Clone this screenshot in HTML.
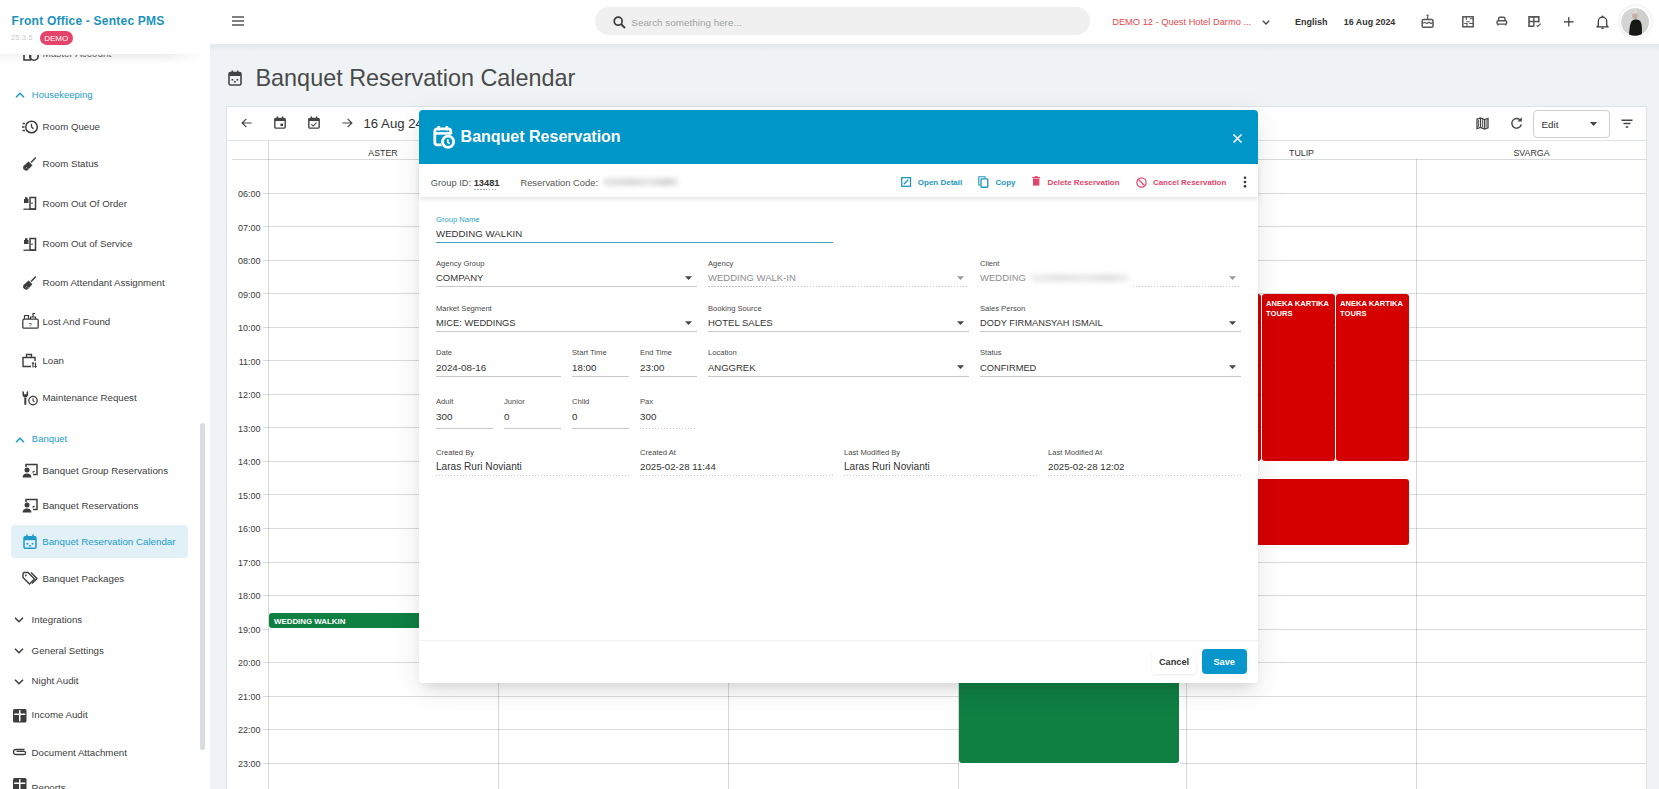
<!DOCTYPE html>
<html><head><meta charset="utf-8"><title>Banquet Reservation Calendar</title>
<style>
html,body{margin:0;padding:0;}
body{width:1659px;height:789px;overflow:hidden;position:relative;background:#eff3f6;font-family:"Liberation Sans",sans-serif;}
.a{position:absolute;}
.t{position:absolute;white-space:nowrap;}
svg{overflow:visible;}
</style></head><body>

<div class="a" style="left:210px;top:44px;width:1449px;height:8px;background:linear-gradient(#e4e8eb,#eff3f6);"></div>
<svg class="a" style="left:228px;top:70px;" width="14" height="16" viewBox="0 0 14 16"><rect x="1" y="2.5" width="12" height="12.5" rx="1.5" fill="none" stroke="#444" stroke-width="1.6"/><rect x="1" y="2.5" width="12" height="3.5" fill="#444"/><rect x="3.5" y="0.5" width="1.6" height="3" fill="#444"/><rect x="8.9" y="0.5" width="1.6" height="3" fill="#444"/><rect x="3.5" y="9" width="1.8" height="1.6" fill="#444"/><rect x="8.5" y="9" width="1.8" height="1.6" fill="#444"/><rect x="6" y="11" width="1.8" height="1.6" fill="#444"/></svg>
<div class="t " style="left:255.5px;top:63.00px;font-size:23.4px;line-height:30px;color:#4a4a4a;font-weight:400;">Banquet Reservation Calendar</div>
<div class="a" style="left:226px;top:106px;width:1421px;height:700px;background:#fff;border:1px solid #dfe3e7;box-sizing:border-box;"></div>
<div class="a" style="left:227px;top:140.2px;width:1419px;height:1.2px;background:#e1e4e7;"></div>
<div class="a" style="left:232px;top:159px;width:1414px;height:1px;background:rgba(10,15,30,0.15);"></div>
<div class="a" style="left:268px;top:141px;width:1px;height:660px;background:rgba(10,15,30,0.16);"></div>
<div class="a" style="left:498px;top:159px;width:1px;height:660px;background:rgba(10,15,30,0.16);"></div>
<div class="a" style="left:728px;top:159px;width:1px;height:660px;background:rgba(10,15,30,0.16);"></div>
<div class="a" style="left:958px;top:159px;width:1px;height:660px;background:rgba(10,15,30,0.16);"></div>
<div class="a" style="left:1186px;top:159px;width:1px;height:660px;background:rgba(10,15,30,0.16);"></div>
<div class="a" style="left:1416px;top:159px;width:1px;height:660px;background:rgba(10,15,30,0.16);"></div>
<div class="a" style="left:263px;top:193px;width:1383px;height:1px;background:rgba(10,15,30,0.15);"></div>
<div class="t" style="left:220.5px;width:40px;text-align:right;top:184.17px;font-size:9px;line-height:20px;color:#3c3c3c;font-weight:400;">06:00</div>
<div class="a" style="left:263px;top:226px;width:1383px;height:1px;background:rgba(10,15,30,0.15);"></div>
<div class="t" style="left:220.5px;width:40px;text-align:right;top:217.69px;font-size:9px;line-height:20px;color:#3c3c3c;font-weight:400;">07:00</div>
<div class="a" style="left:263px;top:260px;width:1383px;height:1px;background:rgba(10,15,30,0.15);"></div>
<div class="t" style="left:220.5px;width:40px;text-align:right;top:251.21px;font-size:9px;line-height:20px;color:#3c3c3c;font-weight:400;">08:00</div>
<div class="a" style="left:263px;top:293px;width:1383px;height:1px;background:rgba(10,15,30,0.15);"></div>
<div class="t" style="left:220.5px;width:40px;text-align:right;top:284.73px;font-size:9px;line-height:20px;color:#3c3c3c;font-weight:400;">09:00</div>
<div class="a" style="left:263px;top:327px;width:1383px;height:1px;background:rgba(10,15,30,0.15);"></div>
<div class="t" style="left:220.5px;width:40px;text-align:right;top:318.25px;font-size:9px;line-height:20px;color:#3c3c3c;font-weight:400;">10:00</div>
<div class="a" style="left:263px;top:360px;width:1383px;height:1px;background:rgba(10,15,30,0.15);"></div>
<div class="t" style="left:220.5px;width:40px;text-align:right;top:351.77px;font-size:9px;line-height:20px;color:#3c3c3c;font-weight:400;">11:00</div>
<div class="a" style="left:263px;top:394px;width:1383px;height:1px;background:rgba(10,15,30,0.15);"></div>
<div class="t" style="left:220.5px;width:40px;text-align:right;top:385.29px;font-size:9px;line-height:20px;color:#3c3c3c;font-weight:400;">12:00</div>
<div class="a" style="left:263px;top:427px;width:1383px;height:1px;background:rgba(10,15,30,0.15);"></div>
<div class="t" style="left:220.5px;width:40px;text-align:right;top:418.81px;font-size:9px;line-height:20px;color:#3c3c3c;font-weight:400;">13:00</div>
<div class="a" style="left:263px;top:461px;width:1383px;height:1px;background:rgba(10,15,30,0.15);"></div>
<div class="t" style="left:220.5px;width:40px;text-align:right;top:452.33px;font-size:9px;line-height:20px;color:#3c3c3c;font-weight:400;">14:00</div>
<div class="a" style="left:263px;top:494px;width:1383px;height:1px;background:rgba(10,15,30,0.15);"></div>
<div class="t" style="left:220.5px;width:40px;text-align:right;top:485.85px;font-size:9px;line-height:20px;color:#3c3c3c;font-weight:400;">15:00</div>
<div class="a" style="left:263px;top:528px;width:1383px;height:1px;background:rgba(10,15,30,0.15);"></div>
<div class="t" style="left:220.5px;width:40px;text-align:right;top:519.37px;font-size:9px;line-height:20px;color:#3c3c3c;font-weight:400;">16:00</div>
<div class="a" style="left:263px;top:562px;width:1383px;height:1px;background:rgba(10,15,30,0.15);"></div>
<div class="t" style="left:220.5px;width:40px;text-align:right;top:552.89px;font-size:9px;line-height:20px;color:#3c3c3c;font-weight:400;">17:00</div>
<div class="a" style="left:263px;top:595px;width:1383px;height:1px;background:rgba(10,15,30,0.15);"></div>
<div class="t" style="left:220.5px;width:40px;text-align:right;top:586.41px;font-size:9px;line-height:20px;color:#3c3c3c;font-weight:400;">18:00</div>
<div class="a" style="left:263px;top:629px;width:1383px;height:1px;background:rgba(10,15,30,0.15);"></div>
<div class="t" style="left:220.5px;width:40px;text-align:right;top:619.93px;font-size:9px;line-height:20px;color:#3c3c3c;font-weight:400;">19:00</div>
<div class="a" style="left:263px;top:662px;width:1383px;height:1px;background:rgba(10,15,30,0.15);"></div>
<div class="t" style="left:220.5px;width:40px;text-align:right;top:653.45px;font-size:9px;line-height:20px;color:#3c3c3c;font-weight:400;">20:00</div>
<div class="a" style="left:263px;top:696px;width:1383px;height:1px;background:rgba(10,15,30,0.15);"></div>
<div class="t" style="left:220.5px;width:40px;text-align:right;top:686.97px;font-size:9px;line-height:20px;color:#3c3c3c;font-weight:400;">21:00</div>
<div class="a" style="left:263px;top:729px;width:1383px;height:1px;background:rgba(10,15,30,0.15);"></div>
<div class="t" style="left:220.5px;width:40px;text-align:right;top:720.49px;font-size:9px;line-height:20px;color:#3c3c3c;font-weight:400;">22:00</div>
<div class="a" style="left:263px;top:763px;width:1383px;height:1px;background:rgba(10,15,30,0.15);"></div>
<div class="t" style="left:220.5px;width:40px;text-align:right;top:754.01px;font-size:9px;line-height:20px;color:#3c3c3c;font-weight:400;">23:00</div>
<div class="t" style="left:283.0px;width:200px;text-align:center;top:142.86px;font-size:8.8px;line-height:20px;color:#333;font-weight:400;">ASTER</div>
<div class="t" style="left:1201.5px;width:200px;text-align:center;top:142.86px;font-size:8.8px;line-height:20px;color:#333;font-weight:400;">TULIP</div>
<div class="t" style="left:1431.5px;width:200px;text-align:center;top:142.86px;font-size:8.8px;line-height:20px;color:#333;font-weight:400;">SVARGA</div>
<svg class="a" style="left:241px;top:118.3px;" width="11" height="10" viewBox="0 0 11 10"><path d="M10.6 5H1.3M5.4 0.8L1.1 5l4.3 4.2" fill="none" stroke="#444" stroke-width="1.15"/></svg>
<svg class="a" style="left:274px;top:116.3px;" width="12" height="13" viewBox="0 0 12 13"><rect x="0.8" y="2.5" width="10.4" height="9.6" rx="1.1" fill="none" stroke="#444" stroke-width="1.4"/><rect x="0.8" y="2.5" width="10.4" height="2.5" fill="#444"/><rect x="2.7" y="0.4" width="1.4" height="2.4" fill="#444"/><rect x="7.9" y="0.4" width="1.4" height="2.4" fill="#444"/><rect x="6.4" y="7.6" width="2.6" height="2.4" fill="#444"/></svg>
<svg class="a" style="left:307.8px;top:116.3px;" width="12" height="13" viewBox="0 0 12 13"><rect x="0.8" y="2.5" width="10.4" height="9.6" rx="1.1" fill="none" stroke="#444" stroke-width="1.4"/><rect x="0.8" y="2.5" width="10.4" height="2.5" fill="#444"/><rect x="2.7" y="0.4" width="1.4" height="2.4" fill="#444"/><rect x="7.9" y="0.4" width="1.4" height="2.4" fill="#444"/><path d="M3.3 8.3l1.9 1.7 3.3-3.3" fill="none" stroke="#444" stroke-width="1.05"/></svg>
<svg class="a" style="left:341.5px;top:118.3px;" width="11" height="10" viewBox="0 0 11 10"><path d="M0.4 5h9.3M5.6 0.8L9.9 5l-4.3 4.2" fill="none" stroke="#444" stroke-width="1.15"/></svg>
<div class="t " style="left:363.5px;top:113.90px;font-size:13.2px;line-height:20px;color:#333;font-weight:400;">16 Aug 24</div>
<svg class="a" style="left:1476px;top:117px;" width="13" height="12" viewBox="0 0 13 12"><path d="M1 2.2l3.5-1.2 4 1.5 3.5-1.2v9.5l-3.5 1.2-4-1.5-3.5 1.2z" fill="none" stroke="#444" stroke-width="1.3"/><path d="M4.5 1v9.6M8.5 2.5v9.5" stroke="#444" stroke-width="1.3"/><path d="M2.5 3v7M6.5 2v8.5M10.2 3v7.5" stroke="#444" stroke-width="0.8"/></svg>
<svg class="a" style="left:1510px;top:117px;" width="13" height="12" viewBox="0 0 13 12"><path d="M10.6 3.6A4.8 4.8 0 1 0 11.3 7.5" fill="none" stroke="#444" stroke-width="1.4"/><path d="M7.4 4.5h4.4V0.2z" fill="#444"/></svg>
<div class="a" style="left:1532.5px;top:110px;width:77px;height:27.5px;background:#fff;border:1px solid #cfcfcf;border-radius:4px;box-sizing:border-box;"></div>
<div class="t " style="left:1541.5px;top:114.69px;font-size:9.8px;line-height:20px;color:#333;font-weight:400;">Edit</div>
<svg class="a" style="left:1590px;top:122px;" width="7" height="4" viewBox="0 0 7 4"><path d="M0 0h7L3.5 4z" fill="#444"/></svg>
<svg class="a" style="left:1620.5px;top:118.5px;" width="12" height="10" viewBox="0 0 12 10"><path d="M0.5 1.2h11M2.5 4.6h7M4.7 8h2.6" stroke="#444" stroke-width="1.5"/></svg>
<div class="a" style="left:1250px;top:294px;width:11px;height:166.5px;background:#d50000;border-radius:3px;"></div>
<div class="a" style="left:1262px;top:294px;width:72.5px;height:166.5px;background:#d50000;border-radius:3px;"></div>
<div class="a" style="left:1336px;top:294px;width:73px;height:166.5px;background:#d50000;border-radius:3px;"></div>
<div class="a" style="left:1250px;top:460.5px;width:160px;height:1.5px;background:#fff;"></div>
<div class="t " style="left:1266px;top:298.53px;font-size:7.6px;line-height:10px;color:#fff;font-weight:700;">ANEKA KARTIKA</div>
<div class="t " style="left:1266px;top:308.53px;font-size:7.6px;line-height:10px;color:#fff;font-weight:700;">TOURS</div>
<div class="t " style="left:1340px;top:298.53px;font-size:7.6px;line-height:10px;color:#fff;font-weight:700;">ANEKA KARTIKA</div>
<div class="t " style="left:1340px;top:308.53px;font-size:7.6px;line-height:10px;color:#fff;font-weight:700;">TOURS</div>
<div class="a" style="left:1200px;top:479px;width:209px;height:65.5px;background:#d50000;border-radius:3px;"></div>
<div class="a" style="left:959px;top:600px;width:220px;height:162.5px;background:#0f7f42;border-radius:3px;"></div>
<div class="a" style="left:959px;top:762.5px;width:221px;height:1.5px;background:#fff;"></div>
<div class="a" style="left:269px;top:612.8px;width:300px;height:15.5px;background:#0f7f42;border-radius:3px;"></div>
<div class="a" style="left:269px;top:628.3px;width:300px;height:1.4px;background:#fff;"></div>
<div class="t " style="left:274px;top:615.84px;font-size:7.9px;line-height:12px;color:#fff;font-weight:700;">WEDDING WALKIN</div>
<div class="a" style="left:0px;top:0px;width:210px;height:789px;background:#fff;"></div>
<svg class="a" style="left:22.5px;top:45.5px;" width="16" height="16" viewBox="0 0 16 16"><path d="M1 4h6.5v10H1z" fill="none" stroke="#3d3d3d" stroke-width="1.6"/><circle cx="11" cy="10" r="4.2" fill="none" stroke="#3d3d3d" stroke-width="1.6"/></svg>
<div class="t " style="left:42.4px;top:43.90px;font-size:10px;line-height:20px;color:#666;font-weight:400;">Master Account</div>
<div class="a" style="left:0px;top:44px;width:210px;height:10.5px;background:#fff;"></div>
<div class="a" style="left:0px;top:54px;width:205px;height:10px;background:linear-gradient(rgba(0,0,0,0.07),rgba(0,0,0,0.035) 50%,rgba(0,0,0,0));-webkit-mask-image:linear-gradient(90deg,rgba(0,0,0,.6),#000 40%,#000 80%,rgba(0,0,0,0));"></div>
<svg class="a" style="left:14.5px;top:92px;" width="10" height="6" viewBox="0 0 10 6"><path d="M1 5.2L5 1.3l4 3.9" fill="none" stroke="#1e9bc6" stroke-width="1.6"/></svg>
<div class="t " style="left:31.8px;top:85.08px;font-size:9.5px;line-height:20px;color:#1e9bc6;font-weight:400;">Housekeeping</div>
<svg class="a" style="left:22px;top:118.8px;" width="16" height="16" viewBox="0 0 16 16"><circle cx="9.5" cy="8" r="5.8" fill="none" stroke="#3d3d3d" stroke-width="1.5"/><path d="M9.5 4.8V8l2 1.8" fill="none" stroke="#3d3d3d" stroke-width="1.3"/><path d="M0.5 4.5h2.5M0 8h2.5M0.5 11.5h2.5" stroke="#3d3d3d" stroke-width="1.3"/></svg>
<div class="t " style="left:42.4px;top:117.09px;font-size:9.7px;line-height:20px;color:#404040;font-weight:400;">Room Queue</div>
<svg class="a" style="left:22px;top:155.9px;" width="15" height="16" viewBox="0 0 15 16"><path d="M9 6.5L13.8 1.6" stroke="#3d3d3d" stroke-width="1.5"/><path d="M1.2 10.2L6.6 5.4 10.4 9.2 5.6 14.6c-1.8.5-3.5-.3-4.4-2z" fill="#3d3d3d"/><path d="M3.5 12.5l1.5-1.5M5.3 13.4l1.5-1.5" stroke="#fff" stroke-width="0.5"/></svg>
<div class="t " style="left:42.4px;top:154.19px;font-size:9.7px;line-height:20px;color:#404040;font-weight:400;">Room Status</div>
<svg class="a" style="left:22px;top:195.4px;" width="16" height="16" viewBox="0 0 16 16"><path d="M8 2.5h5.5v11.5H8z" fill="none" stroke="#3d3d3d" stroke-width="1.5"/><path d="M10 7.5v1.5" stroke="#3d3d3d" stroke-width="1.3"/><rect x="2" y="4" width="4.5" height="4" fill="#3d3d3d"/><rect x="3" y="2.2" width="2.5" height="2" fill="#3d3d3d"/><path d="M1.5 14.2h12.5" stroke="#3d3d3d" stroke-width="1.3"/></svg>
<div class="t " style="left:42.4px;top:193.69px;font-size:9.7px;line-height:20px;color:#404040;font-weight:400;">Room Out Of Order</div>
<svg class="a" style="left:22px;top:236.0px;" width="16" height="16" viewBox="0 0 16 16"><path d="M8 2.5h5.5v11.5H8z" fill="none" stroke="#3d3d3d" stroke-width="1.5"/><path d="M10 7.5v1.5" stroke="#3d3d3d" stroke-width="1.3"/><rect x="2" y="4" width="4.5" height="4" fill="#3d3d3d"/><rect x="3" y="2.2" width="2.5" height="2" fill="#3d3d3d"/><path d="M1.5 14.2h12.5" stroke="#3d3d3d" stroke-width="1.3"/></svg>
<div class="t " style="left:42.4px;top:234.29px;font-size:9.7px;line-height:20px;color:#404040;font-weight:400;">Room Out of Service</div>
<svg class="a" style="left:22px;top:275.1px;" width="15" height="16" viewBox="0 0 15 16"><path d="M9 6.5L13.8 1.6" stroke="#3d3d3d" stroke-width="1.5"/><path d="M1.2 10.2L6.6 5.4 10.4 9.2 5.6 14.6c-1.8.5-3.5-.3-4.4-2z" fill="#3d3d3d"/><path d="M3.5 12.5l1.5-1.5M5.3 13.4l1.5-1.5" stroke="#fff" stroke-width="0.5"/></svg>
<div class="t " style="left:42.4px;top:273.39px;font-size:9.7px;line-height:20px;color:#404040;font-weight:400;">Room Attendant Assignment</div>
<svg class="a" style="left:22px;top:311.9px;" width="17" height="17" viewBox="0 0 17 17"><rect x="0.8" y="7.2" width="15.4" height="9" rx="1.2" fill="none" stroke="#3d3d3d" stroke-width="1.3"/><path d="M2.5 7V3.5h4V7M8.5 7V5h5v2M11 5V1.5h2" fill="none" stroke="#3d3d3d" stroke-width="1.2"/><text x="6.5" y="15" font-size="6" font-family="Liberation Sans" fill="#3d3d3d">?</text></svg>
<div class="t " style="left:42.4px;top:312.19px;font-size:9.7px;line-height:20px;color:#404040;font-weight:400;">Lost And Found</div>
<svg class="a" style="left:22px;top:353.0px;" width="16" height="15" viewBox="0 0 16 15"><path d="M9 13.5H1V4.5h12V8" fill="none" stroke="#3d3d3d" stroke-width="1.4"/><path d="M4.5 4.5V1.5h5v3" fill="none" stroke="#3d3d3d" stroke-width="1.3"/><path d="M11 9.5v5M13.5 9.5v5" stroke="#3d3d3d" stroke-width="1.2"/><path d="M10 11l1-1.5 1 1.5M12.5 13l1 1.5 1-1.5" fill="none" stroke="#3d3d3d" stroke-width="1"/></svg>
<div class="t " style="left:42.4px;top:351.29px;font-size:9.7px;line-height:20px;color:#404040;font-weight:400;">Loan</div>
<svg class="a" style="left:22px;top:389.9px;" width="16" height="16" viewBox="0 0 16 16"><path d="M3.3 14.8V7.5" stroke="#3d3d3d" stroke-width="2"/><path d="M0.5 0.8v3.6a2.8 2.8 0 0 0 5.6 0V0.8L4.6 2v2.2H2V2z" fill="#3d3d3d"/><circle cx="11" cy="10.6" r="4.2" fill="none" stroke="#3d3d3d" stroke-width="1.3"/><path d="M11 8.2v2.6l1.6 1.1" fill="none" stroke="#3d3d3d" stroke-width="1.1"/></svg>
<div class="t " style="left:42.4px;top:388.19px;font-size:9.7px;line-height:20px;color:#404040;font-weight:400;">Maintenance Request</div>
<svg class="a" style="left:14.5px;top:436.5px;" width="10" height="6" viewBox="0 0 10 6"><path d="M1 5.2L5 1.3l4 3.9" fill="none" stroke="#1e9bc6" stroke-width="1.6"/></svg>
<div class="t " style="left:31.8px;top:429.49px;font-size:9.5px;line-height:20px;color:#1e9bc6;font-weight:400;">Banquet</div>
<div class="a" style="left:10.8px;top:525px;width:177.4px;height:33.4px;background:#e2f1f8;border-radius:4px;"></div>
<svg class="a" style="left:22px;top:462.5px;" width="16" height="15" viewBox="0 0 16 15"><path d="M4 4V1.5h11v10h-4" fill="none" stroke="#3d3d3d" stroke-width="1.5"/><circle cx="5" cy="7" r="2.5" fill="#3d3d3d"/><path d="M0.5 14.5c0-2.5 2-4 4.5-4s4.5 1.5 4.5 4z" fill="#3d3d3d"/><path d="M10.5 9.5l2 -1.5" stroke="#3d3d3d" stroke-width="1.3"/></svg>
<div class="t " style="left:42.4px;top:460.59px;font-size:9.75px;line-height:20px;color:#404040;font-weight:400;">Banquet Group Reservations</div>
<svg class="a" style="left:22px;top:498px;" width="16" height="15" viewBox="0 0 16 15"><path d="M4 4V1.5h11v10h-4" fill="none" stroke="#3d3d3d" stroke-width="1.5"/><circle cx="5" cy="7" r="2.5" fill="#3d3d3d"/><path d="M0.5 14.5c0-2.5 2-4 4.5-4s4.5 1.5 4.5 4z" fill="#3d3d3d"/><path d="M10.5 9.5l2 -1.5" stroke="#3d3d3d" stroke-width="1.3"/></svg>
<div class="t " style="left:42.4px;top:496.09px;font-size:9.75px;line-height:20px;color:#404040;font-weight:400;">Banquet Reservations</div>
<svg class="a" style="left:23px;top:533.5px;" width="14" height="15" viewBox="0 0 14 15"><rect x="1" y="2.8" width="12" height="11.5" rx="1.4" fill="none" stroke="#1e9bc6" stroke-width="1.5"/><rect x="1" y="2.8" width="12" height="3.4" fill="#1e9bc6"/><rect x="3.2" y="0.5" width="1.6" height="3" fill="#1e9bc6"/><rect x="9.2" y="0.5" width="1.6" height="3" fill="#1e9bc6"/><rect x="3.5" y="9" width="1.8" height="1.6" fill="#1e9bc6"/><rect x="8.7" y="9" width="1.8" height="1.6" fill="#1e9bc6"/><rect x="6.1" y="11" width="1.8" height="1.6" fill="#1e9bc6"/></svg>
<div class="t " style="left:42.2px;top:532.29px;font-size:9.75px;line-height:20px;color:#1e9bc6;font-weight:400;">Banquet Reservation Calendar</div>
<svg class="a" style="left:22px;top:571px;" width="16" height="15" viewBox="0 0 16 15"><path d="M1 2.5v4l6.5 6.5 5-5L6 1.5H2z" fill="none" stroke="#3d3d3d" stroke-width="1.4"/><path d="M9 1.5l6 6-5 5" fill="none" stroke="#3d3d3d" stroke-width="1.4"/><circle cx="3.8" cy="4.5" r="0.9" fill="#3d3d3d"/></svg>
<div class="t " style="left:42.4px;top:569.29px;font-size:9.75px;line-height:20px;color:#404040;font-weight:400;">Banquet Packages</div>
<svg class="a" style="left:14px;top:617px;" width="10" height="6" viewBox="0 0 10 6"><path d="M1 0.8L5 4.7l4-3.9" fill="none" stroke="#3d3d3d" stroke-width="1.6"/></svg>
<div class="t " style="left:31.6px;top:610.29px;font-size:9.7px;line-height:20px;color:#404040;font-weight:400;">Integrations</div>
<svg class="a" style="left:14px;top:648px;" width="10" height="6" viewBox="0 0 10 6"><path d="M1 0.8L5 4.7l4-3.9" fill="none" stroke="#3d3d3d" stroke-width="1.6"/></svg>
<div class="t " style="left:31.6px;top:640.89px;font-size:9.7px;line-height:20px;color:#404040;font-weight:400;">General Settings</div>
<svg class="a" style="left:14px;top:678.5px;" width="10" height="6" viewBox="0 0 10 6"><path d="M1 0.8L5 4.7l4-3.9" fill="none" stroke="#3d3d3d" stroke-width="1.6"/></svg>
<div class="t " style="left:31.6px;top:671.39px;font-size:9.7px;line-height:20px;color:#404040;font-weight:400;">Night Audit</div>
<svg class="a" style="left:13px;top:708.5px;" width="14" height="14" viewBox="0 0 14 14"><rect x="0" y="0" width="13.5" height="13.5" rx="1.5" fill="#3d3d3d"/><path d="M1.2 5.2h11.1M6.75 1.2v11.1" stroke="#fff" stroke-width="1.5"/></svg>
<div class="t " style="left:31.6px;top:705.49px;font-size:9.7px;line-height:20px;color:#404040;font-weight:400;">Income Audit</div>
<svg class="a" style="left:12px;top:746px;" width="15" height="11" viewBox="0 0 15 11"><path d="M12.5 3.5H4a2.5 2.5 0 0 0 0 5h8a1.6 1.6 0 0 0 0-3.2H4.5" fill="none" stroke="#3d3d3d" stroke-width="1.3"/></svg>
<div class="t " style="left:31.6px;top:742.69px;font-size:9.7px;line-height:20px;color:#404040;font-weight:400;">Document Attachment</div>
<svg class="a" style="left:13px;top:778px;" width="14" height="14" viewBox="0 0 14 14"><rect x="0" y="0" width="13.5" height="13.5" rx="1.5" fill="#3d3d3d"/><path d="M1.2 5.2h11.1M6.75 1.2v11.1" stroke="#fff" stroke-width="1.5"/></svg>
<div class="t " style="left:31.6px;top:778.29px;font-size:9.7px;line-height:20px;color:#404040;font-weight:400;">Reports</div>
<div class="a" style="left:199.8px;top:423px;width:5.6px;height:327px;background:#d9dde1;border-radius:3px;"></div>
<div class="a" style="left:0px;top:0px;width:1659px;height:44px;background:#fff;"></div>
<div class="t " style="left:11.6px;top:11.06px;font-size:12.1px;line-height:20px;color:#1b93bd;font-weight:700;letter-spacing:0.18px;">Front Office - Sentec PMS</div>
<div class="t " style="left:11px;top:28.42px;font-size:7.2px;line-height:20px;color:#c8c8c8;font-weight:400;letter-spacing:0.3px;">25.3.5</div>
<div class="a" style="left:40px;top:31px;width:32.5px;height:14px;background:#e5436a;border-radius:7px;"></div>
<div class="t" style="left:36.25px;width:40px;text-align:center;top:28.54px;font-size:8.0px;line-height:20px;color:#fff;font-weight:400;">DEMO</div>
<svg class="a" style="left:231.5px;top:16px;" width="12" height="10" viewBox="0 0 12 10"><path d="M0 1h12M0 5h12M0 9h12" stroke="#555" stroke-width="1.5"/></svg>
<div class="a" style="left:595px;top:7px;width:495px;height:28.3px;background:#f0f0f0;border-radius:14px;"></div>
<svg class="a" style="left:613px;top:15.5px;" width="13" height="13" viewBox="0 0 13 13"><circle cx="5.2" cy="5.2" r="4" fill="none" stroke="#3a3a3a" stroke-width="1.7"/><path d="M8.2 8.2l3.8 3.8" stroke="#3a3a3a" stroke-width="1.9"/></svg>
<div class="t " style="left:631.3px;top:12.90px;font-size:9.9px;line-height:20px;color:#a3a3a3;font-weight:400;">Search something here...</div>
<div class="t " style="left:1112.2px;top:12.28px;font-size:9.3px;line-height:20px;color:#e5484d;font-weight:400;">DEMO 12 - Quest Hotel Darmo ...</div>
<svg class="a" style="left:1261.5px;top:20px;" width="8" height="5" viewBox="0 0 8 5"><path d="M0.8 0.8L4 4l3.2-3.2" fill="none" stroke="#444" stroke-width="1.3"/></svg>
<div class="t " style="left:1295px;top:12.27px;font-size:9.0px;line-height:20px;color:#333;font-weight:700;font-weight:600;">English</div>
<div class="t " style="left:1343.8px;top:12.47px;font-size:8.9px;line-height:20px;color:#333;font-weight:700;">16 Aug 2024</div>
<svg class="a" style="left:1420.5px;top:14px;" width="13" height="14" viewBox="0 0 13 14"><rect x="1.2" y="5.6" width="10.8" height="7.6" rx="1.3" fill="none" stroke="#555" stroke-width="1.5"/><path d="M1.8 9.4l1.8-1.1 2.2 1.2 2.2-1.3 2.2 1.3 1.6-1" fill="none" stroke="#555" stroke-width="1.1"/><path d="M6.6 2.6v3" stroke="#555" stroke-width="1.2"/><circle cx="6.6" cy="1.6" r="1.1" fill="#555"/></svg>
<svg class="a" style="left:1461.5px;top:15.5px;" width="12" height="12" viewBox="0 0 12 12"><rect x="0.8" y="0.8" width="10.4" height="10" fill="none" stroke="#555" stroke-width="1.5"/><path d="M4.3 0.8v3.2M4.3 5.8h3.5M7.8 2.8h3.4M2.2 7.5h2.8v3.3M7.2 7.5h4" fill="none" stroke="#555" stroke-width="1.1"/></svg>
<svg class="a" style="left:1495.5px;top:16px;" width="12" height="10" viewBox="0 0 12 10"><path d="M2.6 5V2.6a1.4 1.4 0 0 1 1.4-1.4h3.6a1.4 1.4 0 0 1 1.4 1.4V5" fill="none" stroke="#555" stroke-width="1.4"/><rect x="1" y="4.8" width="9.6" height="3.3" rx="1.2" fill="none" stroke="#555" stroke-width="1.4"/><path d="M2 8v1.6M9.6 8v1.6" stroke="#555" stroke-width="1.3"/></svg>
<svg class="a" style="left:1527.5px;top:15.5px;" width="15" height="12" viewBox="0 0 15 12"><path d="M10.8 6.5V0.9H1v9.4h5.2" fill="none" stroke="#555" stroke-width="1.6"/><path d="M1 5.5h9.8M5.8 0.9v9.4" stroke="#555" stroke-width="1.4"/><path d="M8.6 9.3l1.2 1.1 2.8-2.7" fill="none" stroke="#555" stroke-width="1.1"/></svg>
<svg class="a" style="left:1563.5px;top:16.5px;" width="10" height="10" viewBox="0 0 10 10"><path d="M4.8 0v9.6M0 4.8h9.6" stroke="#3a3a3a" stroke-width="1.2"/></svg>
<svg class="a" style="left:1595.5px;top:14.5px;" width="13" height="14" viewBox="0 0 13 14"><path d="M2.3 10.6V6.3a4.2 4.2 0 0 1 8.4 0v4.3l1.4 1.2H0.9z" fill="none" stroke="#3a3a3a" stroke-width="1.25" stroke-linejoin="round"/><path d="M5.3 13.2h2.4" stroke="#3a3a3a" stroke-width="1.3"/><circle cx="6.5" cy="1.3" r="0.9" fill="#3a3a3a"/></svg>
<div class="a" style="left:1619.5px;top:5.5px;width:31px;height:31px;border-radius:50%;background:#fff;box-shadow:0 0 4px rgba(0,0,0,0.12);"></div>
<svg class="a" style="left:1621px;top:7.5px;" width="28" height="28" viewBox="0 0 28 28"><defs><clipPath id="avc"><circle cx="14" cy="14" r="13.8"/></clipPath></defs><g clip-path="url(#avc)"><rect width="28" height="28" fill="#d4d4d4"/><rect x="16" y="0" width="12" height="28" fill="#cfcfcf"/><path d="M8 29c0.3-7 0.8-13 2.6-15.8 1.4-1.6 3.4-1.9 5-1.6 3 .5 4.8 2 5.2 6.5.3 3.5.2 7.5-.3 10.9z" fill="#161816"/><ellipse cx="13.9" cy="7.6" rx="2.6" ry="3.6" fill="#c9aba0"/><path d="M11.6 5.5c.3-2.8 4.3-2.8 4.8-.3z" fill="#e8dcd5"/></g></svg>
<div class="a" style="left:419px;top:110px;width:839px;height:573px;background:#fff;border-radius:4px;box-shadow:0 9px 12px -5px rgba(0,0,0,.11),0 7px 30px 1px rgba(0,0,0,.085);"></div>
<div class="a" style="left:419px;top:110px;width:839px;height:54px;background:#0096c8;border-radius:4px 4px 0 0;"></div>
<svg class="a" style="left:432.5px;top:124.5px;" width="24" height="25" viewBox="0 0 24 25"><path d="M8.6 19.9H4a2.2 2.2 0 0 1-2.2-2.2V6a2.2 2.2 0 0 1 2.2-2.2h11.6a2.2 2.2 0 0 1 2.2 2.2V9.2" fill="none" stroke="#fff" stroke-width="2.8"/><path d="M1.8 8.4h16" stroke="#fff" stroke-width="2.6"/><path d="M5.8 1v4.4M13.8 1v4.4" stroke="#fff" stroke-width="2.6"/><circle cx="15.1" cy="16.8" r="5.6" fill="#0096c8" stroke="#fff" stroke-width="2.8"/><path d="M14.8 14.2v2.9l1.7 1.5" fill="none" stroke="#fff" stroke-width="1.8"/></svg>
<div class="t " style="left:460.6px;top:125.78px;font-size:16.0px;line-height:22px;color:#fff;font-weight:700;">Banquet Reservation</div>
<svg class="a" style="left:1232.5px;top:133.5px;" width="9" height="9" viewBox="0 0 9 9"><path d="M0.5 0.5l8 8M8.5 0.5l-8 8" stroke="#fff" stroke-width="1.6"/></svg>
<div class="a" style="left:419px;top:164px;width:839px;height:33px;background:#fff;box-shadow:0 2px 4px rgba(0,0,0,.07),0 4px 6px rgba(0,0,0,.03);"></div>
<div class="t " style="left:430.8px;top:172.98px;font-size:9.3px;line-height:20px;color:#555;font-weight:400;">Group ID: <b style="color:#333">13481</b></div>
<div class="a" style="left:474px;top:188.5px;width:23px;height:1px;background:repeating-linear-gradient(90deg,#aaa 0,#aaa 1.5px,transparent 1.5px,transparent 3px);"></div>
<div class="t " style="left:520.4px;top:172.98px;font-size:9.4px;line-height:20px;color:#555;font-weight:400;">Reservation Code:</div>
<div class="a" style="left:603px;top:178px;width:76px;height:8px;background:linear-gradient(90deg,#e6e6e6,#dcdcdc 40%,#e8e8e8 60%,#d6d6d6 85%,#eeeeee);border-radius:4px;filter:blur(2px);"></div>
<svg class="a" style="left:901px;top:176.5px;" width="11" height="10" viewBox="0 0 11 10"><rect x="0.7" y="0.7" width="8.8" height="8.6" fill="none" stroke="#1f97bd" stroke-width="1.3"/><path d="M2.8 7.2l4.4-4.4" stroke="#1f97bd" stroke-width="1.3"/></svg>
<div class="t " style="left:917.8px;top:172.84px;font-size:8.0px;line-height:20px;color:#1f97bd;font-weight:700;">Open Detail</div>
<svg class="a" style="left:978px;top:175.8px;" width="12" height="12" viewBox="0 0 12 12"><path d="M2.3 9H0.8V0.8h6.2v1.3" fill="none" stroke="#1f97bd" stroke-width="1.1"/><rect x="3" y="2.8" width="6.8" height="8.4" rx="0.8" fill="none" stroke="#1f97bd" stroke-width="1.35"/></svg>
<div class="t " style="left:995.5px;top:172.84px;font-size:8.0px;line-height:20px;color:#1f97bd;font-weight:700;">Copy</div>
<svg class="a" style="left:1032px;top:176.2px;" width="9" height="10" viewBox="0 0 9 10"><path d="M0.3 1.6h7.8" stroke="#e2456a" stroke-width="1.3"/><path d="M2.8 0.8h2.8" stroke="#e2456a" stroke-width="1.4"/><path d="M1 2.6h6.4v7H1z" fill="#e2456a"/></svg>
<div class="t " style="left:1047.6px;top:172.84px;font-size:8.0px;line-height:20px;color:#e2456a;font-weight:700;">Delete Reservation</div>
<svg class="a" style="left:1136px;top:176.5px;" width="11" height="11" viewBox="0 0 11 11"><circle cx="5.5" cy="5.5" r="4.6" fill="none" stroke="#e2456a" stroke-width="1.25"/><path d="M2.3 2.3l6.4 6.4" stroke="#e2456a" stroke-width="1.25"/></svg>
<div class="t " style="left:1153px;top:172.84px;font-size:7.9px;line-height:20px;color:#e2456a;font-weight:700;">Cancel Reservation</div>
<svg class="a" style="left:1243px;top:176px;" width="4" height="12" viewBox="0 0 4 12"><circle cx="2" cy="1.8" r="1.3" fill="#333"/><circle cx="2" cy="6" r="1.3" fill="#333"/><circle cx="2" cy="10.2" r="1.3" fill="#333"/></svg>
<div class="t " style="left:436px;top:209.63px;font-size:7.6px;line-height:20px;color:#2aa3cc;font-weight:400;">Group Name</div>
<div class="t " style="left:436px;top:224.09px;font-size:9.7px;line-height:20px;color:#333;font-weight:400;">WEDDING WALKIN</div>
<div class="a" style="left:436px;top:241.5px;width:397px;height:1.6px;background:#45a2c0;"></div>
<div class="t " style="left:436px;top:254.03px;font-size:7.6px;line-height:20px;color:#4a4a4a;font-weight:400;">Agency Group</div>
<div class="t " style="left:436px;top:268.49px;font-size:9.5px;line-height:20px;color:#333;font-weight:400;">COMPANY</div>
<div class="a" style="left:436px;top:286px;width:261px;height:1px;background:#c9c9c9;"></div>
<svg class="a" style="left:684.5px;top:276.2px;" width="8" height="5" viewBox="0 0 8 5"><path d="M0 0.2h7L3.5 4z" fill="#444"/></svg>
<div class="t " style="left:708px;top:254.03px;font-size:7.6px;line-height:20px;color:#4a4a4a;font-weight:400;">Agency</div>
<div class="t " style="left:708px;top:268.49px;font-size:9.5px;line-height:20px;color:#8d8d8d;font-weight:400;">WEDDING WALK-IN</div>
<div class="a" style="left:708px;top:286px;width:261px;height:1px;background:repeating-linear-gradient(90deg,#c4c4c4 0,#c4c4c4 1.5px,transparent 1.5px,transparent 3px);"></div>
<svg class="a" style="left:956.5px;top:276.2px;" width="8" height="5" viewBox="0 0 8 5"><path d="M0 0.2h7L3.5 4z" fill="#9a9a9a"/></svg>
<div class="t " style="left:980px;top:254.03px;font-size:7.6px;line-height:20px;color:#4a4a4a;font-weight:400;">Client</div>
<div class="t " style="left:980px;top:268.49px;font-size:9.5px;line-height:20px;color:#8d8d8d;font-weight:400;">WEDDING</div>
<div class="a" style="left:980px;top:286px;width:261px;height:1px;background:repeating-linear-gradient(90deg,#c4c4c4 0,#c4c4c4 1.5px,transparent 1.5px,transparent 3px);"></div>
<svg class="a" style="left:1228.5px;top:276.2px;" width="8" height="5" viewBox="0 0 8 5"><path d="M0 0.2h7L3.5 4z" fill="#9a9a9a"/></svg>
<div class="a" style="left:980px;top:284.5px;width:153px;height:3px;background:#fff;filter:blur(0.6px);"></div>
<div class="a" style="left:1030px;top:274px;width:100px;height:8px;background:linear-gradient(90deg,#f0f0f0,#e4e4e4 30%,#ececec 55%,#e2e2e2 80%,#f3f3f3);border-radius:4px;filter:blur(2px);"></div>
<div class="t " style="left:436px;top:298.73px;font-size:7.6px;line-height:20px;color:#4a4a4a;font-weight:400;">Market Segment</div>
<div class="t " style="left:436px;top:313.08px;font-size:9.3px;line-height:20px;color:#333;font-weight:400;">MICE: WEDDINGS</div>
<div class="a" style="left:436px;top:331px;width:261px;height:1px;background:#c9c9c9;"></div>
<svg class="a" style="left:684.5px;top:320.8px;" width="8" height="5" viewBox="0 0 8 5"><path d="M0 0.2h7L3.5 4z" fill="#444"/></svg>
<div class="t " style="left:708px;top:298.73px;font-size:7.6px;line-height:20px;color:#4a4a4a;font-weight:400;">Booking Source</div>
<div class="t " style="left:708px;top:313.09px;font-size:9.5px;line-height:20px;color:#333;font-weight:400;">HOTEL SALES</div>
<div class="a" style="left:708px;top:331px;width:261px;height:1px;background:#c9c9c9;"></div>
<svg class="a" style="left:956.5px;top:320.8px;" width="8" height="5" viewBox="0 0 8 5"><path d="M0 0.2h7L3.5 4z" fill="#444"/></svg>
<div class="t " style="left:980px;top:298.73px;font-size:7.6px;line-height:20px;color:#4a4a4a;font-weight:400;">Sales Person</div>
<div class="t " style="left:980px;top:313.08px;font-size:9.3px;line-height:20px;color:#333;font-weight:400;">DODY FIRMANSYAH ISMAIL</div>
<div class="a" style="left:980px;top:331px;width:261px;height:1px;background:#c9c9c9;"></div>
<svg class="a" style="left:1228.5px;top:320.8px;" width="8" height="5" viewBox="0 0 8 5"><path d="M0 0.2h7L3.5 4z" fill="#444"/></svg>
<div class="t " style="left:436px;top:343.43px;font-size:7.6px;line-height:20px;color:#4a4a4a;font-weight:400;">Date</div>
<div class="t " style="left:436px;top:357.69px;font-size:9.8px;line-height:20px;color:#333;font-weight:400;">2024-08-16</div>
<div class="a" style="left:436px;top:376px;width:125px;height:1px;background:#c9c9c9;"></div>
<div class="t " style="left:572px;top:343.43px;font-size:7.6px;line-height:20px;color:#4a4a4a;font-weight:400;">Start Time</div>
<div class="t " style="left:572px;top:357.69px;font-size:9.8px;line-height:20px;color:#333;font-weight:400;">18:00</div>
<div class="a" style="left:572px;top:376px;width:57px;height:1px;background:#c9c9c9;"></div>
<div class="t " style="left:640px;top:343.43px;font-size:7.6px;line-height:20px;color:#4a4a4a;font-weight:400;">End Time</div>
<div class="t " style="left:640px;top:357.69px;font-size:9.8px;line-height:20px;color:#333;font-weight:400;">23:00</div>
<div class="a" style="left:640px;top:376px;width:57px;height:1px;background:#c9c9c9;"></div>
<div class="t " style="left:708px;top:343.43px;font-size:7.6px;line-height:20px;color:#4a4a4a;font-weight:400;">Location</div>
<div class="t " style="left:708px;top:357.69px;font-size:9.5px;line-height:20px;color:#333;font-weight:400;">ANGGREK</div>
<div class="a" style="left:708px;top:376px;width:261px;height:1px;background:#c9c9c9;"></div>
<svg class="a" style="left:956.5px;top:365.4px;" width="8" height="5" viewBox="0 0 8 5"><path d="M0 0.2h7L3.5 4z" fill="#444"/></svg>
<div class="t " style="left:980px;top:343.43px;font-size:7.6px;line-height:20px;color:#4a4a4a;font-weight:400;">Status</div>
<div class="t " style="left:980px;top:357.68px;font-size:9.3px;line-height:20px;color:#333;font-weight:400;">CONFIRMED</div>
<div class="a" style="left:980px;top:376px;width:261px;height:1px;background:#c9c9c9;"></div>
<svg class="a" style="left:1228.5px;top:365.4px;" width="8" height="5" viewBox="0 0 8 5"><path d="M0 0.2h7L3.5 4z" fill="#444"/></svg>
<div class="t " style="left:436px;top:392.23px;font-size:7.6px;line-height:20px;color:#4a4a4a;font-weight:400;">Adult</div>
<div class="t " style="left:436px;top:406.79px;font-size:9.8px;line-height:20px;color:#333;font-weight:400;">300</div>
<div class="a" style="left:436px;top:428px;width:57px;height:1px;background:#c9c9c9;"></div>
<div class="t " style="left:504px;top:392.23px;font-size:7.6px;line-height:20px;color:#4a4a4a;font-weight:400;">Junior</div>
<div class="t " style="left:504px;top:406.79px;font-size:9.8px;line-height:20px;color:#333;font-weight:400;">0</div>
<div class="a" style="left:504px;top:428px;width:57px;height:1px;background:#c9c9c9;"></div>
<div class="t " style="left:572px;top:392.23px;font-size:7.6px;line-height:20px;color:#4a4a4a;font-weight:400;">Child</div>
<div class="t " style="left:572px;top:406.79px;font-size:9.8px;line-height:20px;color:#333;font-weight:400;">0</div>
<div class="a" style="left:572px;top:428px;width:57px;height:1px;background:#c9c9c9;"></div>
<div class="t " style="left:640px;top:392.23px;font-size:7.6px;line-height:20px;color:#4a4a4a;font-weight:400;">Pax</div>
<div class="t " style="left:640px;top:406.79px;font-size:9.8px;line-height:20px;color:#333;font-weight:400;">300</div>
<div class="a" style="left:640px;top:428px;width:57px;height:1px;background:repeating-linear-gradient(90deg,#c4c4c4 0,#c4c4c4 1.5px,transparent 1.5px,transparent 3px);"></div>
<div class="t " style="left:436px;top:442.53px;font-size:7.6px;line-height:20px;color:#4a4a4a;font-weight:400;">Created By</div>
<div class="t " style="left:436px;top:456.70px;font-size:10.1px;line-height:20px;color:#333;font-weight:400;">Laras Ruri Novianti</div>
<div class="a" style="left:436px;top:475px;width:193px;height:1px;background:repeating-linear-gradient(90deg,#c4c4c4 0,#c4c4c4 1.5px,transparent 1.5px,transparent 3px);"></div>
<div class="t " style="left:640px;top:442.53px;font-size:7.6px;line-height:20px;color:#4a4a4a;font-weight:400;">Created At</div>
<div class="t " style="left:640px;top:456.69px;font-size:9.7px;line-height:20px;color:#333;font-weight:400;">2025-02-28 11:44</div>
<div class="a" style="left:640px;top:475px;width:193px;height:1px;background:repeating-linear-gradient(90deg,#c4c4c4 0,#c4c4c4 1.5px,transparent 1.5px,transparent 3px);"></div>
<div class="t " style="left:844px;top:442.53px;font-size:7.6px;line-height:20px;color:#4a4a4a;font-weight:400;">Last Modified By</div>
<div class="t " style="left:844px;top:456.70px;font-size:10.1px;line-height:20px;color:#333;font-weight:400;">Laras Ruri Novianti</div>
<div class="a" style="left:844px;top:475px;width:193px;height:1px;background:repeating-linear-gradient(90deg,#c4c4c4 0,#c4c4c4 1.5px,transparent 1.5px,transparent 3px);"></div>
<div class="t " style="left:1048px;top:442.53px;font-size:7.6px;line-height:20px;color:#4a4a4a;font-weight:400;">Last Modified At</div>
<div class="t " style="left:1048px;top:456.69px;font-size:9.7px;line-height:20px;color:#333;font-weight:400;">2025-02-28 12:02</div>
<div class="a" style="left:1048px;top:475px;width:193px;height:1px;background:repeating-linear-gradient(90deg,#c4c4c4 0,#c4c4c4 1.5px,transparent 1.5px,transparent 3px);"></div>
<div class="a" style="left:419px;top:639.5px;width:839px;height:1px;background:#f2f2f2;"></div>
<div class="a" style="left:1152px;top:649.5px;width:44px;height:24.5px;background:#fff;border-radius:4px;box-shadow:0 1px 3px rgba(0,0,0,.08);"></div>
<div class="t" style="left:1152.0px;width:44px;text-align:center;top:652.08px;font-size:9.2px;line-height:20px;color:#333;font-weight:700;">Cancel</div>
<div class="a" style="left:1202px;top:649px;width:44.5px;height:25px;background:#0996cc;border-radius:4px;"></div>
<div class="t" style="left:1202.2px;width:44px;text-align:center;top:652.08px;font-size:9.2px;line-height:20px;color:#fff;font-weight:700;">Save</div>
</body></html>
